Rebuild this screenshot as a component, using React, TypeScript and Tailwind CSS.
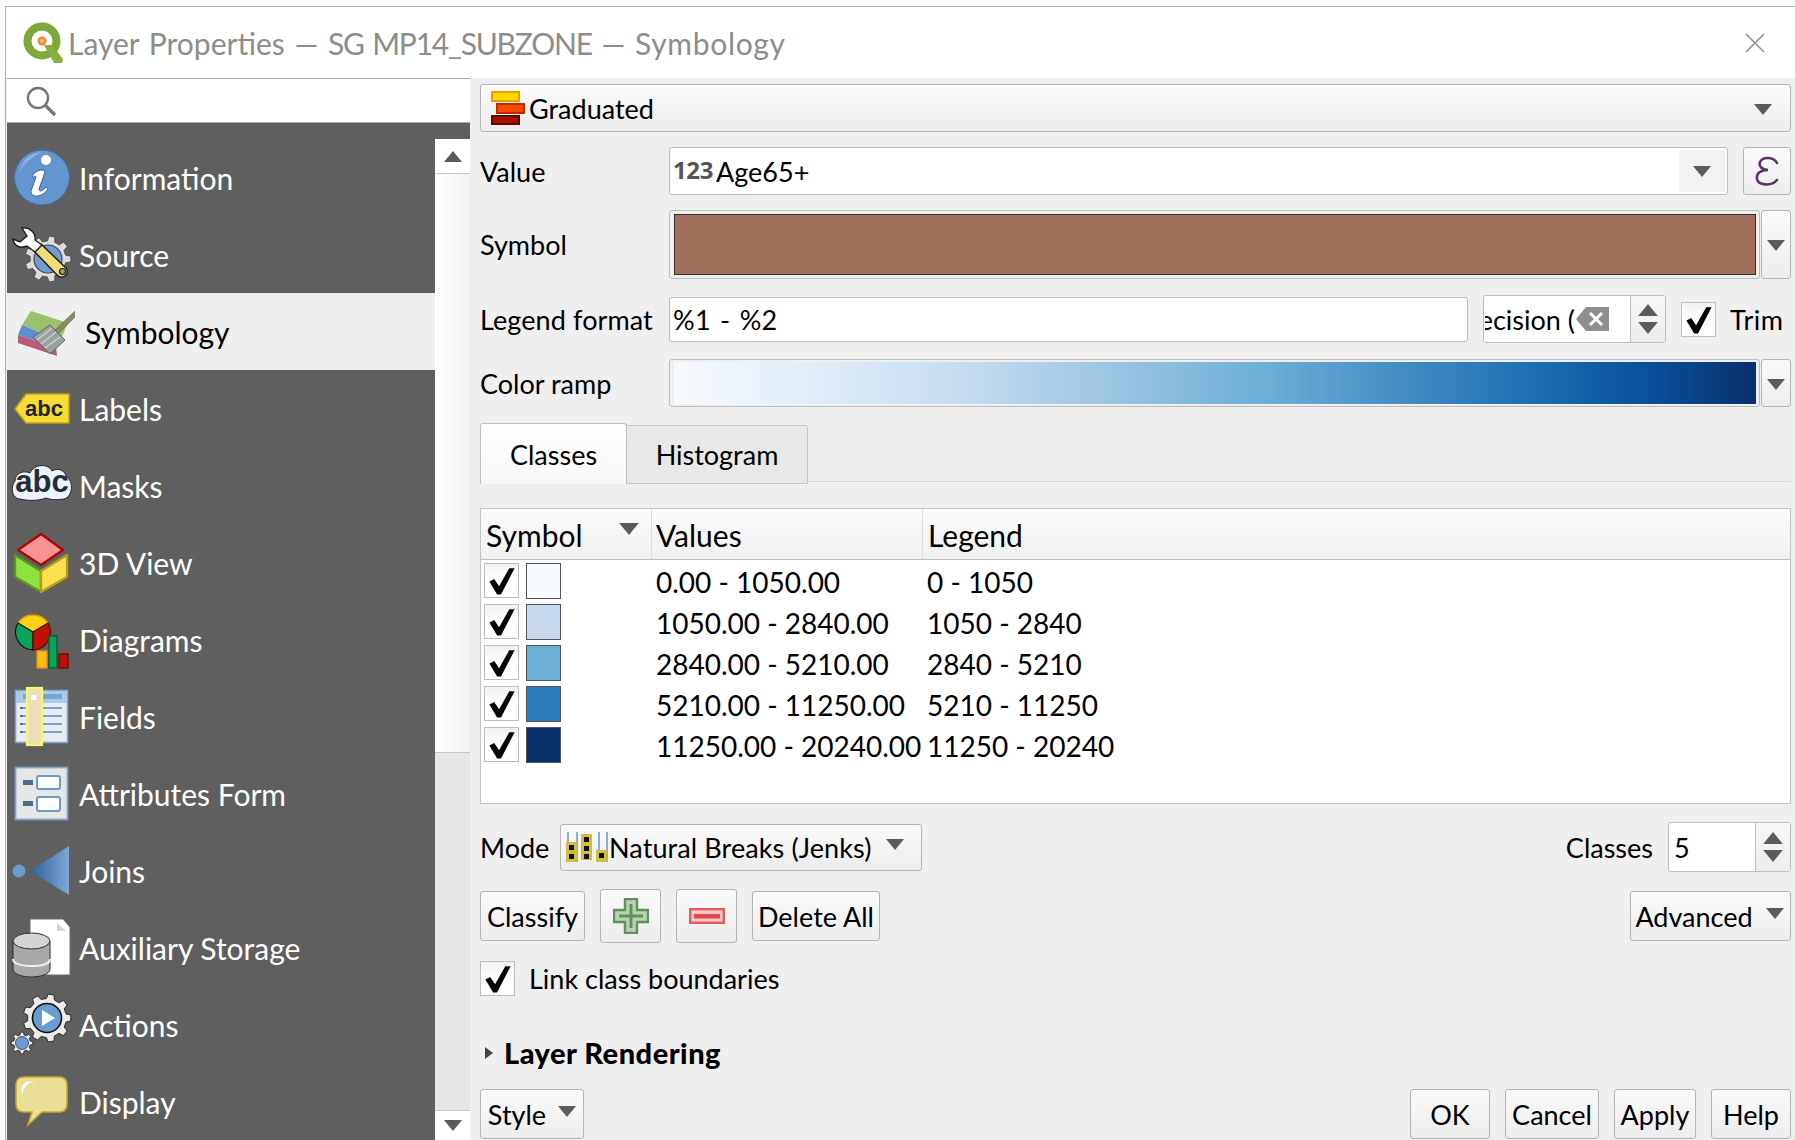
import React from "react";

// gear outline used by a few of the sidebar icons
function gear(cx: number, cy: number, r: number, teeth: number, depth: number) {
  const pts: string[] = [];
  const step = (Math.PI * 2) / teeth;
  for (let i = 0; i < teeth; i++) {
    const a = i * step;
    const list: [number, number][] = [
      [a - step * 0.3, r - depth],
      [a - step * 0.18, r],
      [a + step * 0.18, r],
      [a + step * 0.3, r - depth],
    ];
    for (const [t, rad] of list) {
      pts.push(`${(cx + Math.cos(t) * rad).toFixed(2)},${(cy + Math.sin(t) * rad).toFixed(2)}`);
    }
  }
  return `M${pts.join("L")}Z`;
}

function Caret({ up = false, className = "" }: { up?: boolean; className?: string }) {
  return (
    <svg viewBox="0 0 18 11" className={`w-[18px] h-[11px] shrink-0 ${className}`}>
      <path d={up ? "M9 0L18 11H0Z" : "M0 0H18L9 11Z"} fill="#5b5b5b" />
    </svg>
  );
}

function Check({ className = "w-[35px] h-[35px]" }: { className?: string }) {
  return (
    <div className={`relative shrink-0 border border-[#bdbdbd] bg-gradient-to-b from-[#f2f2f2] via-white to-white ${className}`}>
      <svg viewBox="0 0 34 34" preserveAspectRatio="none" className="absolute inset-0 w-full h-full">
        <path d="M4.5 18L9.5 15.5L14.5 23L25 4.5H30.5L16.5 31.5H12.5Z" fill="#050505" />
      </svg>
    </div>
  );
}

function Btn({ children, className = "" }: { children: React.ReactNode; className?: string }) {
  return (
    <div className={`flex items-center justify-center pt-[2px] rounded-[3px] border border-[#b4b4b4] bg-gradient-to-b from-[#fbfbfb] to-[#ececec] ${className}`}>
      {children}
    </div>
  );
}

function Spin() {
  return (
    <div className="flex flex-col items-center justify-center gap-[6px] h-full w-[35px] border-l border-[#bdbdbd] bg-gradient-to-b from-[#f8f8f8] to-[#ececec]">
      <Caret up className="!w-[20px] !h-[12px]" />
      <Caret className="!w-[20px] !h-[12px]" />
    </div>
  );
}

const Icon = ({ children }: { children: React.ReactNode }) => (
  <svg viewBox="0 0 65 65" className="w-[65px] h-[65px] shrink-0">
    {children}
  </svg>
);

const icons: Record<string, React.ReactNode> = {
  Information: (
    <Icon>
      <defs>
        <linearGradient id="infoShine" x1="0" y1="0" x2="0" y2="1">
          <stop offset="0" stopColor="#9dbde4" />
          <stop offset="1" stopColor="#6a9bd3" />
        </linearGradient>
      </defs>
      <circle cx="32" cy="32.5" r="27.5" fill="#6396cf" stroke="#3c6ea8" strokeWidth="1" />
      <path d="M8 30C10 16 20 8 32 7C22 11 13 20 8 30Z" fill="url(#infoShine)" />
      <circle cx="36" cy="15" r="5" fill="#fff" />
      <path d="M22 31C26 25 34 23 35 27L29 44C29 47 32 47 36 42L38 44C33 52 21 54 21 46L26 32C25 30 24 31 23.5 32.5Z" fill="#fff" stroke="#234d80" strokeWidth="0.8" />
    </Icon>
  ),
  Source: (
    <Icon>
      <path d={gear(38, 37, 23, 9, 5)} fill="#dcdcdc" stroke="#444" strokeWidth="0.8" />
      <circle cx="38" cy="37" r="14" fill="#6e9bd1" stroke="#444" strokeWidth="1.2" />
      <path d="M24 29L31 22L56 46C58 49 58 52 55 54C52 56 49 55 47 53Z" fill="#f0dc7a" stroke="#1f1f1f" strokeWidth="1.5" />
      <circle cx="52.5" cy="49.5" r="3" fill="#a59a68" stroke="#1f1f1f" strokeWidth="1.2" />
      <path d="M25 30L17 24C10 27 4 24 3 17L10 20L17 14L12 6C20 5 26 11 25 18L32 23Z" fill="#fff" stroke="#1d1d1d" strokeWidth="1.4" />
    </Icon>
  ),
  Symbology: (
    <Icon>
      <path d="M21 12L58 24L50 42L12 26Z" fill="#9cc16e" />
      <path d="M12 26L50 42L46 48L8 36Z" fill="#5a8fd0" />
      <path d="M8 36L46 48L47 57L8 44Z" fill="#b85a78" />
      <path d="M65 12L68 15L46 37L43 33Z" fill="#8e8a68" stroke="#67634a" strokeWidth="0.6" />
      <path d="M23 38L40 26L55 41L40 55Z" fill="#9aa1a0" stroke="#5e6462" strokeWidth="1" />
      <path d="M27 41L42 29M31 45L46 33M35 49L50 38" stroke="#d1d4d2" strokeWidth="1.2" />
    </Icon>
  ),
  Labels: (
    <Icon>
      <path d="M16 18H59V47H16L5 33Z" fill="#f5dc37" stroke="#c0a30f" strokeWidth="1.5" />
      <text x="34" y="40" textAnchor="middle" fontFamily="Liberation Sans" fontWeight="700" fontSize="22" fill="#26261c">abc</text>
    </Icon>
  ),
  Masks: (
    <Icon>
      <path d="M10 46C2 46 0 34 5 28C5 20 14 17 20 20C24 11 38 10 42 18C48 14 56 18 56 24C64 27 63 44 54 46C46 47 42 47 36 45C28 48 18 48 10 46Z" fill="#eef2fb" stroke="#1f2530" strokeWidth="1" />
      <text x="32" y="39" textAnchor="middle" fontFamily="Liberation Sans" fontWeight="700" fontSize="31" fill="#262d3a">abc</text>
    </Icon>
  ),
  "3D View": (
    <Icon>
      <path d="M5 25L31 41V62L5 47Z" fill="#8ee03d" stroke="#5e8f25" strokeWidth="2.4" strokeLinejoin="round" />
      <path d="M57 25L31 41V62L57 47Z" fill="#fde04f" stroke="#b59a1d" strokeWidth="2.4" strokeLinejoin="round" />
      <path d="M31 4L53 20L31 35L8 20Z" fill="#f99393" stroke="#a80808" strokeWidth="2.4" strokeLinejoin="round" />
    </Icon>
  ),
  Diagrams: (
    <Icon>
      <path d="M23 25L8 16A18 18 0 0 1 38 16Z" fill="#fcd116" stroke="#e89b00" strokeWidth="1.4" />
      <path d="M23 25V43A18 18 0 0 1 8 16Z" fill="#0aa458" stroke="#111" strokeWidth="1.2" />
      <path d="M23 25L38 16A18 18 0 0 1 23 43Z" fill="#c01005" stroke="#4d0a05" strokeWidth="1.2" />
      <rect x="27" y="44" width="10" height="17" fill="#fdbc11" stroke="#e98c0f" strokeWidth="1.4" />
      <rect x="39" y="29" width="8" height="32" fill="#0aa458" stroke="#0b5c35" strokeWidth="1.4" />
      <rect x="49" y="47" width="9" height="14" fill="#c01005" stroke="#6a0f08" strokeWidth="1.4" />
    </Icon>
  ),
  Fields: (
    <Icon>
      <rect x="5.5" y="6.5" width="52" height="52" fill="#e6edf5" stroke="#7fa3cc" strokeWidth="1.6" />
      <rect x="6" y="7" width="51" height="12" fill="#a9cbea" />
      <rect x="13" y="10" width="39" height="5" fill="#7aa3cf" />
      <path d="M13 24H52M13 32H52M13 40H52M13 48H52" stroke="#7aa3cf" strokeWidth="2" />
      <path d="M10 24H13M10 32H13M10 40H13M10 48H13" stroke="#5f6f85" strokeWidth="2" />
      <rect x="17" y="4" width="15" height="57" fill="#e9e0b5" stroke="#fbf56a" strokeWidth="2.2" />
      <rect x="21.5" y="11" width="5" height="5" fill="#fff" />
    </Icon>
  ),
  "Attributes Form": (
    <Icon>
      <rect x="5.5" y="6.5" width="52" height="52" fill="#e6e6e6" stroke="#7fa3cc" strokeWidth="1.8" />
      <rect x="27" y="15" width="23" height="13" rx="2" fill="#fff" stroke="#6f99c8" strokeWidth="2" />
      <rect x="27" y="36" width="23" height="14" rx="2" fill="#fff" stroke="#6f99c8" strokeWidth="2" />
      <rect x="13" y="19" width="10" height="5" fill="#4f6b8c" />
      <rect x="13" y="40" width="10" height="5" fill="#4f6b8c" />
    </Icon>
  ),
  Joins: (
    <Icon>
      <defs>
        <linearGradient id="joinFill" x1="0" y1="0" x2="1" y2="0">
          <stop offset="0" stopColor="#2f5f9c" />
          <stop offset="1" stopColor="#7fa8d6" />
        </linearGradient>
      </defs>
      <circle cx="9" cy="33" r="6.5" fill="#6d9ad0" />
      <path d="M20 33L59 8V57Z" fill="url(#joinFill)" />
    </Icon>
  ),
  "Auxiliary Storage": (
    <Icon>
      <path d="M20 4H53L60 12V60H20Z" fill="#fff" stroke="#6d6d6d" strokeWidth="1" />
      <path d="M47 8L56 16H47Z" fill="#d6d6d6" />
      <path d="M3 26V54C3 59 12 62 21 62C31 62 40 59 40 54V26Z" fill="#a8a8a8" stroke="#2e2e2e" strokeWidth="1" />
      <path d="M3 44C3 49 12 51 21 51C31 51 40 49 40 44" fill="none" stroke="#eee" strokeWidth="2" />
      <ellipse cx="21.5" cy="26" rx="18.5" ry="8" fill="#d4d4d4" stroke="#2e2e2e" strokeWidth="1" />
    </Icon>
  ),
  Actions: (
    <Icon>
      <path d={gear(37, 26, 24, 9, 4.5)} fill="#ececec" stroke="#2a2a2a" strokeWidth="1" />
      <circle cx="37" cy="26" r="14.5" fill="#6a9bd3" stroke="#111" strokeWidth="1.6" />
      <path d="M32 18L45 26L32 34Z" fill="#fff" />
      <path d={gear(12, 51, 11, 8, 2.5)} fill="#ececec" stroke="#2a2a2a" strokeWidth="1" />
      <circle cx="12" cy="51" r="6.5" fill="#6a9bd3" stroke="#333" strokeWidth="0.8" />
    </Icon>
  ),
  Display: (
    <Icon>
      <path d="M14 8H49C54 8 57 11 57 16V35C57 40 54 43 49 43H32L18 56L22 43H14C9 43 6 40 6 35V16C6 11 9 8 14 8Z" fill="#ebdf95" stroke="#c7a62f" strokeWidth="1.6" />
      <path d="M12 26C10 16 13 12 25 12C17 14 14 18 12 26Z" fill="#fff" />
    </Icon>
  ),
};

const navItems = [
  "Information",
  "Source",
  "Symbology",
  "Labels",
  "Masks",
  "3D View",
  "Diagrams",
  "Fields",
  "Attributes Form",
  "Joins",
  "Auxiliary Storage",
  "Actions",
  "Display",
];

const classRows = [
  { color: "#f7fbff", values: "0.00 - 1050.00", legend: "0 - 1050" },
  { color: "#c6d9ee", values: "1050.00 - 2840.00", legend: "1050 - 2840" },
  { color: "#6baed6", values: "2840.00 - 5210.00", legend: "2840 - 5210" },
  { color: "#2b7bba", values: "5210.00 - 11250.00", legend: "5210 - 11250" },
  { color: "#08306b", values: "11250.00 - 20240.00", legend: "11250 - 20240" },
];

export default function App() {
  return (
    <div className="w-[1795px] h-[1140px] overflow-hidden bg-[#fbfbfb] pl-[5px] pt-[6px] text-black [font-family:Lato,sans-serif]">
      <div className="flex flex-col h-[1134px] border-l border-t border-[#b0b0b0] bg-[#efefef]">
        {/* title bar */}
        <div className="flex items-center h-[71px] shrink-0 bg-white pl-[16px] pr-[30px]">
          <svg viewBox="0 0 42 42" className="w-[42px] h-[42px] shrink-0">
            <circle cx="20" cy="19" r="14.5" fill="#fff" stroke="#7da83a" strokeWidth="8" />
            <path d="M22 23L30 23L41 37L40 41H32Z" fill="#87b03f" />
            <circle cx="20" cy="19" r="4.5" fill="#ef8b33" />
            <circle cx="20" cy="19" r="2" fill="#f5c26b" />
          </svg>
          <span className="ml-[4px] mt-[2px] text-[30px] text-[#8d8d8d] whitespace-nowrap [word-spacing:2px]">
            Layer Properties — <span className="tracking-[-1.2px]">SG MP14_SUBZONE</span> — <span className="tracking-[0.7px]">Symbology</span>
          </span>
          <svg viewBox="0 0 20 20" className="ml-auto w-[20px] h-[20px]">
            <path d="M1 1L19 19M19 1L1 19" stroke="#8c8c8c" strokeWidth="1.5" />
          </svg>
        </div>

        <div className="flex flex-1 min-h-0">
          {/* left column */}
          <div className="flex flex-col w-[464px] shrink-0 pl-[1px]">
            <div className="flex items-center h-[45px] shrink-0 bg-white border-t border-b border-[#a8a8a8] pl-[18px]">
              <svg viewBox="0 0 32 32" className="w-[32px] h-[32px]">
                <circle cx="13" cy="13" r="10" fill="none" stroke="#777" strokeWidth="2.4" />
                <path d="M20 20L30 30" stroke="#777" strokeWidth="3.4" />
              </svg>
            </div>
            <div className="flex-1 min-h-0 bg-[#5f5f5f] pt-[16px]">
              <div className="flex h-full">
                <div className="flex flex-col w-[428px] shrink-0">
                  {navItems.map((name) => {
                    const active = name === "Symbology";
                    return (
                      <div
                        key={name}
                        className={`flex items-center h-[77px] shrink-0 pl-[3px] gap-[4px] text-[30px] ${active ? "bg-[#efefef] text-black" : "text-white"}`}
                      >
                        {icons[name]}
                        <span className={`mt-[2px] whitespace-nowrap ${active ? "ml-[6px]" : ""}`}>{name}</span>
                      </div>
                    );
                  })}
                </div>
                {/* sidebar scrollbar */}
                <div className="flex flex-col w-[35px] shrink-0 bg-[#e6e6e6]">
                  <div className="flex items-center justify-center h-[35px] shrink-0 bg-white border-b border-[#c8c8c8]">
                    <Caret up className="!w-[20px] !h-[11px]" />
                  </div>
                  <div className="h-[579px] shrink-0 bg-gradient-to-r from-white to-[#f4f4f4] border-b border-[#c4c4c4]" />
                  <div className="flex-1" />
                  <div className="flex items-center justify-center h-[30px] shrink-0 bg-white border-t border-[#c8c8c8]">
                    <Caret className="!w-[20px] !h-[11px]" />
                  </div>
                </div>
              </div>
            </div>
          </div>

          {/* right column */}
          <div className="flex flex-col flex-1 min-w-0 pl-[10px] pr-[4px] pt-[6px] text-[27px]">
            <Btn className="!justify-start h-[48px] shrink-0 pl-[10px] pr-[18px]">
              <svg viewBox="0 0 34 36" className="w-[34px] h-[36px] shrink-0 -mt-[2px]">
                <rect x="1" y="2" width="27" height="9" fill="#ffdc00" stroke="#f59b00" strokeWidth="2" />
                <rect x="6" y="14" width="27" height="9" fill="#f24a00" stroke="#c02a00" strokeWidth="2" />
                <rect x="1" y="26" width="27" height="8" fill="#a81000" stroke="#5d0a00" strokeWidth="2" />
              </svg>
              <span className="ml-[4px]">Graduated</span>
              <Caret className="ml-auto" />
            </Btn>

            <div className="flex items-center h-[48px] shrink-0 mt-[15px]">
              <span className="w-[189px] mt-[2px] shrink-0">Value</span>
              <div className="flex items-center flex-1 h-full bg-white border border-[#bdbdbd] rounded-[3px] pl-[3px] pr-[2px]">
                <span className="text-[24px] font-bold text-[#555] tracking-[-0.4px] mb-[3px] [font-family:'Noto_Sans',sans-serif]">123</span>
                <span className="ml-[3px] mt-[2px]">Age65+</span>
                <div className="flex items-center justify-center ml-auto w-[46px] h-[42px] bg-[#f2f2f2]">
                  <Caret />
                </div>
              </div>
              <Btn className="w-[48px] h-full ml-[15px] shrink-0 !pt-0">
                <svg viewBox="0 0 24 30" className="w-[24px] h-[30px]">
                  <path d="M22 7C19 1 8 0 5 6C3.5 10 7 14 13 14C6 14 1 17 2 23C3 29 16 31 22 24" fill="none" stroke="#5c3566" strokeWidth="2.6" strokeLinecap="round" />
                </svg>
              </Btn>
            </div>

            <div className="flex items-center h-[69px] shrink-0 mt-[15px]">
              <span className="w-[189px] mt-[2px] shrink-0">Symbol</span>
              <div className="flex-1 h-full border border-[#bdbdbd] rounded-[3px] p-[3px] pl-[4px]">
                <div className="h-full bg-[#a2705a] border border-[#2f2f2f]" />
              </div>
              <Btn className="w-[30px] h-full ml-[1px] shrink-0">
                <Caret />
              </Btn>
            </div>

            <div className="flex items-center h-[48px] shrink-0 mt-[16px]">
              <span className="w-[189px] mt-[2px] shrink-0 whitespace-nowrap tracking-[0.1px]">Legend format</span>
              <div className="flex items-center w-[799px] h-[45px] shrink-0 bg-white border border-[#bdbdbd] rounded-[3px] pl-[3px] pt-[2px] [word-spacing:2px] tracking-[0.3px]">
                %1 - %2
              </div>
              <div className="flex items-center w-[183px] h-full ml-[15px] shrink-0 bg-white border border-[#bdbdbd] rounded-[3px] overflow-hidden">
                <div className="flex justify-end w-[90px] overflow-hidden ml-[1px] mt-[2px] shrink-0">
                  <span className="whitespace-nowrap">Precision (</span>
                </div>
                <svg viewBox="0 0 33 24" className="w-[33px] h-[24px] ml-[1px] shrink-0">
                  <path d="M10 0H33V24H10L0 12Z" fill="#8f8f8f" />
                  <path d="M14 6L26 18M26 6L14 18" stroke="#fff" strokeWidth="3" />
                </svg>
                <div className="ml-auto h-full">
                  <Spin />
                </div>
              </div>
              <Check className="w-[35px] h-[35px] ml-[15px]" />
              <span className="ml-[14px] mt-[2px] tracking-[0.5px]">Trim</span>
            </div>

            <div className="flex items-center h-[48px] shrink-0 mt-[16px]">
              <span className="w-[189px] mt-[2px] shrink-0">Color ramp</span>
              <div className="flex-1 h-full border border-[#bdbdbd] rounded-[3px] py-[2px] pl-[4px] pr-[3px]">
                <div className="h-full bg-[linear-gradient(to_right,#f7fbff_0%,#c6dbef_27%,#6baed6_55%,#2171b5_78%,#08519c_90%,#08306b_100%)]" />
              </div>
              <Btn className="w-[30px] h-full ml-[1px] shrink-0">
                <Caret />
              </Btn>
            </div>

            {/* tabs */}
            <div className="flex h-[61px] shrink-0 mt-[16px]">
              <div className="flex items-center justify-center w-[147px] h-full shrink-0 pt-[2px] bg-gradient-to-b from-white to-[#f8f8f8] border border-b-0 border-[#bdbdbd] rounded-t-[3px]">
                Classes
              </div>
              <div className="flex items-center justify-center w-[181px] h-[59px] mt-[2px] shrink-0 pt-[2px] bg-[#e8e8e8] border border-l-0 border-[#c6c6c6] rounded-tr-[3px]">
                Histogram
              </div>
              <div className="flex-1 h-[59px] border-b border-[#d4d4d4]" />
            </div>

            {/* classes table */}
            <div className="flex flex-col h-[296px] shrink-0 mt-[24px] bg-white border border-[#c4c4c4]">
              <div className="flex h-[51px] shrink-0 bg-gradient-to-b from-[#fcfcfc] to-[#f0f0f0] border-b border-[#bdbdbd] text-[30px]">
                <div className="relative flex items-center w-[171px] h-full shrink-0 pl-[5px] pt-[2px] border-r border-[#dcdcdc]">
                  Symbol
                  <Caret className="absolute right-[12px] top-[14px] !w-[20px] !h-[12px]" />
                </div>
                <div className="flex items-center w-[271px] h-full shrink-0 pl-[4px] pt-[2px] border-r border-[#dcdcdc]">Values</div>
                <div className="flex items-center pl-[5px] pt-[2px]">Legend</div>
              </div>
              <div className="flex flex-col text-[28px]">
                {classRows.map((row) => (
                  <div key={row.values} className="flex items-center h-[41px] shrink-0 pl-[3px]">
                    <Check className="w-[35px] h-[35px]" />
                    <div className="w-[35px] h-[36px] shrink-0 ml-[7px] border border-[#555]" style={{ backgroundColor: row.color }} />
                    <span className="w-[271px] shrink-0 ml-[95px] mt-[2px] whitespace-nowrap">{row.values}</span>
                    <span className="mt-[2px] whitespace-nowrap">{row.legend}</span>
                  </div>
                ))}
              </div>
            </div>

            {/* mode row */}
            <div className="flex items-center h-[50px] shrink-0 mt-[18px]">
              <span className="w-[80px] mt-[2px] shrink-0">Mode</span>
              <Btn className="!justify-start w-[362px] h-[47px] shrink-0 pl-[5px]">
                <svg viewBox="0 0 42 30" className="w-[42px] h-[30px] shrink-0 -mt-[2px]">
                  <path d="M2 0V30M11 0V30M33 0V30M41 0V30" stroke="#8fadd0" strokeWidth="2" />
                  <rect x="0" y="10" width="11" height="20" fill="#cdbf3f" />
                  <rect x="15" y="2" width="11" height="26" fill="#cdbf3f" />
                  <rect x="30" y="18" width="11" height="12" fill="#cdbf3f" />
                  <path d="M3 13h5v5H3ZM3 22h5v5H3ZM18 5h5v5h-5ZM18 14h5v5h-5ZM18 22h5v5h-5ZM33 21h5v5h-5Z" fill="#111" />
                </svg>
                <span className="ml-[1px] whitespace-nowrap tracking-[0.1px]">Natural Breaks (Jenks)</span>
                <Caret className="ml-[14px] mb-[8px]" />
              </Btn>
              <span className="ml-auto mt-[2px]">Classes</span>
              <div className="flex items-center w-[123px] h-full ml-[15px] shrink-0 bg-white border border-[#bdbdbd] rounded-[3px] overflow-hidden pl-[5px]">
                <span className="mt-[2px]">5</span>
                <div className="ml-auto h-full">
                  <Spin />
                </div>
              </div>
            </div>

            {/* classify buttons */}
            <div className="flex items-center h-[54px] shrink-0 mt-[17px]">
              <Btn className="w-[105px] h-[50px] shrink-0">Classify</Btn>
              <Btn className="w-[61px] h-full ml-[15px] shrink-0 !pt-0">
                <svg viewBox="0 0 36 36" className="w-[36px] h-[36px]">
                  <path d="M12 1H24V12H35V24H24V35H12V24H1V12H12Z" fill="#b7d3b2" stroke="#5f9060" strokeWidth="2.4" />
                  <path d="M18 6V30M6 18H30" stroke="#5f9060" strokeWidth="3" />
                </svg>
              </Btn>
              <Btn className="w-[61px] h-full ml-[15px] shrink-0 !pt-0">
                <svg viewBox="0 0 36 16" className="w-[36px] h-[16px]">
                  <rect x="1.2" y="1.2" width="33.6" height="13.6" fill="#f5c6c6" stroke="#e85a5f" strokeWidth="2.4" />
                  <rect x="5" y="6" width="26" height="4.5" fill="#e04a50" />
                </svg>
              </Btn>
              <Btn className="w-[128px] h-[50px] ml-[15px] shrink-0">Delete All</Btn>
              <Btn className="w-[161px] h-[50px] ml-auto shrink-0 pr-[1px]">
                <span>Advanced</span>
                <Caret className="ml-[12px] mb-[7px] !w-[20px]" />
              </Btn>
            </div>

            <div className="flex items-center h-[35px] shrink-0 mt-[18px]">
              <Check className="w-[35px] h-[35px]" />
              <span className="ml-[14px] mt-[2px]">Link class boundaries</span>
            </div>

            <div className="flex items-center h-[40px] shrink-0 mt-[37px]">
              <svg viewBox="0 0 8 12" className="w-[8px] h-[12px] ml-[5px] shrink-0">
                <path d="M0 0L8 6L0 12Z" fill="#444" />
              </svg>
              <span className="ml-[11px] font-black text-[29px] tracking-[0.5px]">Layer Rendering</span>
            </div>

            {/* bottom buttons */}
            <div className="flex items-center h-[50px] shrink-0 mt-[16px]">
              <Btn className="w-[104px] h-full shrink-0">
                <span>Style</span>
                <Caret className="ml-[12px] mb-[7px]" />
              </Btn>
              <Btn className="w-[80px] h-full ml-auto shrink-0">OK</Btn>
              <Btn className="w-[94px] h-full ml-[15px] shrink-0">Cancel</Btn>
              <Btn className="w-[82px] h-full ml-[15px] shrink-0">Apply</Btn>
              <Btn className="w-[80px] h-full ml-[15px] shrink-0">Help</Btn>
            </div>
          </div>
        </div>
      </div>
    </div>
  );
}
